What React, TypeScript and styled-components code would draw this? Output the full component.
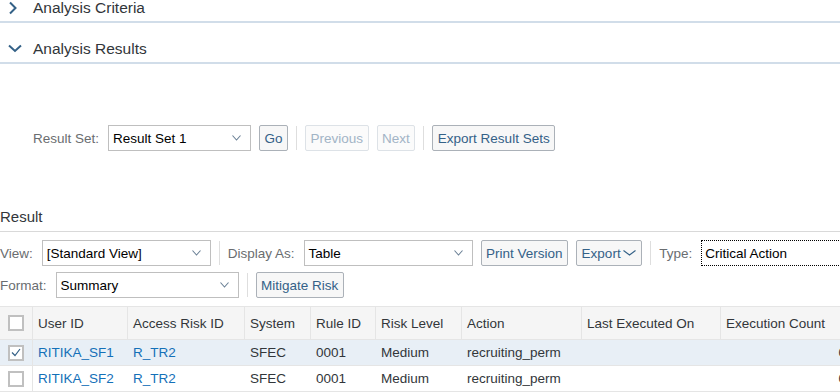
import React from 'react';
import styled, { createGlobalStyle } from 'styled-components';

const FONT = '"Liberation Sans", Arial, sans-serif';

const Global = createGlobalStyle`
  html, body { margin: 0; padding: 0; background: #fff; }
  body { font-family: ${FONT}; color: #32363a; }
  #root { width: 840px; height: 392px; overflow: hidden; }
`;

const Page = styled.div`
  width: 840px;
  height: 392px;
  overflow: hidden;
`;

const PanelHeader = styled.div<{ $first?: boolean }>`
  display: flex;
  align-items: center;
  height: 41px;
  box-sizing: border-box;
  padding: 12px 0 0 8px;
  border-bottom: 2px solid #d1dde9;
  font-size: 15.5px;
  color: #32363a;
  margin-top: ${p => (p.$first ? '-18px' : '0')};
`;

const ChevronBox = styled.span`
  width: 25px;
  display: flex;
  align-items: center;
`;

const Content = styled.div`
  display: flex;
  flex-direction: column;
`;

const Toolbar = styled.div<{ $indent?: number; $top?: number }>`
  display: flex;
  align-items: center;
  gap: 8px;
  height: 26px;
  padding-left: ${p => p.$indent ?? 0}px;
  margin-top: ${p => p.$top ?? 0}px;
  white-space: nowrap;
`;

const Label = styled.span`
  font-size: 13.5px;
  color: #6a6d70;
  margin-right: 1px;
`;

const SelectBox = styled.div<{ $w: number }>`
  width: ${p => p.$w}px;
  height: 26px;
  box-sizing: border-box;
  border: 1px solid #bfbfbf;
  background: #fff;
  display: flex;
  align-items: center;
  justify-content: space-between;
  padding: 0 8px 0 4px;
  font-size: 13.5px;
  color: #000;
  flex-shrink: 0;
`;

const Button = styled.button<{ $disabled?: boolean }>`
  height: 26px;
  box-sizing: border-box;
  padding: 0 4.5px;
  border-radius: 2px;
  border: 1px solid ${p => (p.$disabled ? '#dde2e7' : '#abb1b8')};
  background: ${p => (p.$disabled ? '#fbfbfb' : '#f7f7f7')};
  color: ${p => (p.$disabled ? '#a2b4c6' : '#346187')};
  font-family: ${FONT};
  font-size: 13.5px;
  display: flex;
  align-items: center;
  gap: 1px;
  flex-shrink: 0;
`;

const Separator = styled.span`
  width: 1px;
  height: 24px;
  background: #dedede;
  flex-shrink: 0;
`;

const TypeInput = styled.div`
  width: 160px;
  height: 26px;
  box-sizing: border-box;
  border: 1px dotted #000;
  padding: 0 3px;
  display: flex;
  align-items: center;
  font-size: 13.5px;
  color: #000;
  flex-shrink: 0;
`;

const ResultTitle = styled.div`
  margin-top: 56px;
  height: 25px;
  box-sizing: border-box;
  border-bottom: 1px solid #d9d9d9;
  font-size: 15px;
  color: #32363a;
  line-height: 20px;
`;

const cols = '33px 95px 117px 66px 65px 86px 120px 139px 131px';

const Table = styled.div`
  margin-top: 8px;
  width: 852px;
  border-top: 1px solid #e5e5e5;
`;

const Row = styled.div<{ $head?: boolean; $selected?: boolean }>`
  display: grid;
  grid-template-columns: ${cols};
  height: ${p => (p.$head ? 33 : 26)}px;
  box-sizing: border-box;
  border-bottom: 1px solid #e5e5e5;
  background: ${p => (p.$head ? '#f5f5f5' : p.$selected ? '#e8eff6' : '#fff')};
  font-size: 13.5px;
  color: #32363a;
`;

const Cell = styled.div<{ $head?: boolean; $right?: boolean; $sep?: boolean }>`
  display: flex;
  align-items: center;
  justify-content: ${p => (p.$right ? 'flex-end' : 'flex-start')};
  padding: ${p => (p.$right ? '0 6px 0 0' : '0 0 0 5px')};
  border-right: ${p => (p.$head || p.$sep ? '1px solid #e5e5e5' : 'none')};
  overflow: hidden;
  white-space: nowrap;
`;

const CheckCell = styled(Cell)`
  justify-content: center;
  padding: 0;
`;

const Check = styled.span`
  width: 16px;
  height: 16px;
  box-sizing: border-box;
  border: 2px solid #c0c0c0;
  background: #fff;
  display: flex;
  align-items: center;
  justify-content: center;
`;

const Link = styled.span`
  color: #1470b8;
`;

const Chevron = ({ color = '#6b8096', w = 11 }: { color?: string; w?: number }) => (
  <svg width={w} height="8" viewBox={`0 0 ${w} 8`}>
    <path d={`M1.5 1.5 L${w / 2} 6 L${w - 1.5} 1.5`} fill="none" stroke={color} strokeWidth="1.1" />
  </svg>
);

const rows = [
  { user: 'RITIKA_SF1', selected: true },
  { user: 'RITIKA_SF2', selected: false },
];

export default function App() {
  return (
    <Page>
      <Global />
      <PanelHeader $first>
        <ChevronBox>
          <svg width="10" height="14" viewBox="0 0 10 14">
            <path d="M2 1.5 L7.5 7 L2 12.5" fill="none" stroke="#346187" strokeWidth="2" />
          </svg>
        </ChevronBox>
        Analysis Criteria
      </PanelHeader>
      <PanelHeader>
        <ChevronBox>
          <svg width="14" height="9" viewBox="0 0 14 9">
            <path d="M1 1.5 L7 7 L13 1.5" fill="none" stroke="#346187" strokeWidth="2" />
          </svg>
        </ChevronBox>
        Analysis Results
      </PanelHeader>
      <Content>
        <Toolbar $indent={33} $top={61}>
          <Label>Result Set:</Label>
          <SelectBox $w={143}>
            Result Set 1
            <Chevron />
          </SelectBox>
          <Button>Go</Button>
          <Separator />
          <Button $disabled>Previous</Button>
          <Button $disabled>Next</Button>
          <Separator />
          <Button>Export Result Sets</Button>
        </Toolbar>
        <ResultTitle>Result</ResultTitle>
        <Toolbar $top={8}>
          <Label>View:</Label>
          <SelectBox $w={169}>
            [Standard View]
            <Chevron />
          </SelectBox>
          <Separator />
          <Label>Display As:</Label>
          <SelectBox $w={169}>
            Table
            <Chevron />
          </SelectBox>
          <Button>Print Version</Button>
          <Button>
            Export
            <Chevron color="#346187" w={15} />
          </Button>
          <Separator />
          <Label>Type:</Label>
          <TypeInput>Critical Action</TypeInput>
        </Toolbar>
        <Toolbar $top={6}>
          <Label>Format:</Label>
          <SelectBox $w={183}>
            Summary
            <Chevron />
          </SelectBox>
          <Separator />
          <Button>Mitigate Risk</Button>
        </Toolbar>
        <Table>
          <Row $head>
            <CheckCell $head>
              <Check />
            </CheckCell>
            <Cell $head>User ID</Cell>
            <Cell $head>Access Risk ID</Cell>
            <Cell $head>System</Cell>
            <Cell $head>Rule ID</Cell>
            <Cell $head>Risk Level</Cell>
            <Cell $head>Action</Cell>
            <Cell $head>Last Executed On</Cell>
            <Cell $head>Execution Count</Cell>
          </Row>
          {rows.map(r => (
            <Row key={r.user} $selected={r.selected}>
              <CheckCell $sep>
                <Check>
                  {r.selected && (
                    <svg width="10" height="9" viewBox="0 0 10 9">
                      <path d="M1 4.5 L4 7.5 L9 1" fill="none" stroke="#346187" strokeWidth="1.2" />
                    </svg>
                  )}
                </Check>
              </CheckCell>
              <Cell>
                <Link>{r.user}</Link>
              </Cell>
              <Cell>
                <Link>R_TR2</Link>
              </Cell>
              <Cell>SFEC</Cell>
              <Cell>0001</Cell>
              <Cell>Medium</Cell>
              <Cell>recruiting_perm</Cell>
              <Cell></Cell>
              <Cell $right>0</Cell>
            </Row>
          ))}
        </Table>
      </Content>
    </Page>
  );
}
